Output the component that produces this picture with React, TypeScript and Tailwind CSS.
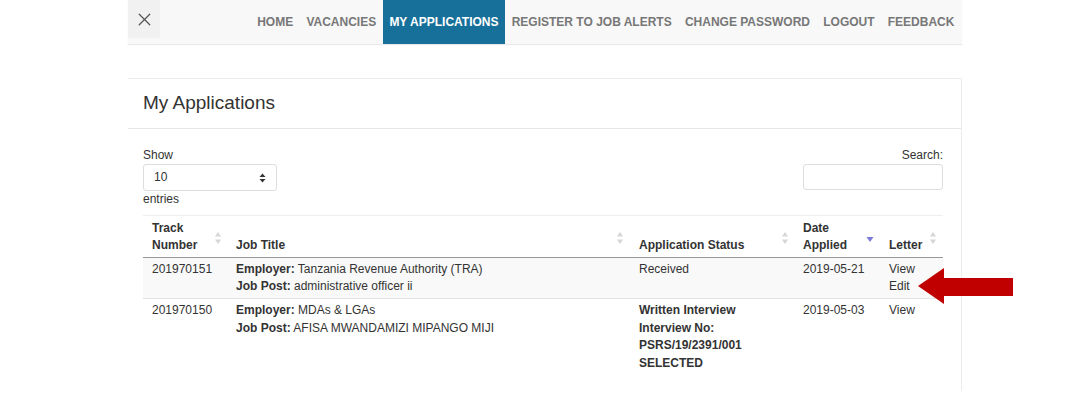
import { X } from 'lucide-react';

const navItems = [
  'HOME',
  'VACANCIES',
  'MY APPLICATIONS',
  'REGISTER TO JOB ALERTS',
  'CHANGE PASSWORD',
  'LOGOUT',
  'FEEDBACK',
];

function SortIcon({ active }: { active?: boolean }) {
  if (active) {
    return (
      <svg width="8" height="12" viewBox="0 0 8 12" className="absolute right-[6px] bottom-[11px]">
        <polygon points="0.5,3 7.5,3 4,8" fill="#7b7bd9" />
      </svg>
    );
  }
  return (
    <svg width="8" height="14" viewBox="0 0 8 14" className="absolute right-[6px] bottom-[12px]">
      <polygon points="4,1 7,5.5 1,5.5" fill="#d6d6d6" />
      <polygon points="1,8.5 7,8.5 4,13" fill="#d6d6d6" />
    </svg>
  );
}

export default function App() {
  return (
    <div
      className="relative min-h-[405px] w-[1080px] bg-white text-[12px] text-[#333]"
      style={{ fontFamily: '"Liberation Sans", Arial, sans-serif' }}
    >
      <div className="ml-[128px] w-[834px]">
        {/* Top nav */}
        <div className="flex h-[44px] items-start justify-between bg-[#f8f8f8] shadow-[0_1px_1px_#e9e9e9]">
          <div className="flex h-[38px] w-[32px] items-center justify-center bg-[#f1f1f1]">
            <X size={21} strokeWidth={1.5} className="text-[#555]" />
          </div>
          <nav className="flex h-[44px] pr-[1px]">
            {navItems.map((item) => (
              <div
                key={item}
                className={`flex h-[44px] items-center px-[6.6px] text-[12px] font-bold ${
                  item === 'MY APPLICATIONS' ? 'bg-[#17709a] text-white' : 'text-[#777]'
                }`}
              >
                {item}
              </div>
            ))}
          </nav>
        </div>

        {/* Panel */}
        <div className="mt-[34px] border-t border-r border-[#ececec]">
          <div className="flex h-[50px] items-center border-b border-[#e6e6e6] px-[15px]">
            <h1 className="text-[19px] font-normal text-[#333]">My Applications</h1>
          </div>

          <div className="px-[15px] pt-[18px] pb-[15px]">
            <div className="flex w-[800px] justify-between leading-[17px]">
              <div>
                <div>Show</div>
                <div className="flex h-[27px] w-[134px] items-center justify-between rounded-[3px] border border-[#ddd] pl-[10px] pr-[10px]">
                  <span>10</span>
                  <svg width="7" height="10" viewBox="0 0 7 10">
                    <polygon points="3.5,0.5 6.5,4 0.5,4" fill="#333" />
                    <polygon points="0.5,6 6.5,6 3.5,9.5" fill="#333" />
                  </svg>
                </div>
                <div>entries</div>
              </div>
              <div className="flex flex-col items-end">
                <div>Search:</div>
                <div className="h-[26px] w-[140px] rounded-[3px] border border-[#ddd]" />
              </div>
            </div>

            <table className="mt-[7px] w-[800px] table-fixed border-collapse border-t border-[#eee] leading-[17px]">
              <colgroup>
                <col className="w-[85px]" />
                <col className="w-[402px]" />
                <col className="w-[165px]" />
                <col className="w-[85px]" />
                <col className="w-[63px]" />
              </colgroup>
              <thead>
                <tr className="border-b border-[#999] text-left align-bottom font-bold">
                  <th className="relative px-[9px] pt-[4px] pb-[3px]">
                    Track
                    <br />
                    Number
                    <SortIcon />
                  </th>
                  <th className="relative px-[8px] pt-[4px] pb-[3px]">
                    Job Title
                    <SortIcon />
                  </th>
                  <th className="relative px-[9px] pt-[4px] pb-[3px]">
                    Application Status
                    <SortIcon />
                  </th>
                  <th className="relative px-[8px] pt-[4px] pb-[3px]">
                    Date
                    <br />
                    Applied
                    <SortIcon active />
                  </th>
                  <th className="relative px-[9px] pt-[4px] pb-[3px]">
                    Letter
                    <SortIcon />
                  </th>
                </tr>
              </thead>
              <tbody>
                <tr className="border-b border-[#e3e3e3] bg-[#f9f9f9] align-top">
                  <td className="px-[9px] pt-[3px] pb-[3px]">201970151</td>
                  <td className="px-[8px] pt-[3px] pb-[3px]">
                    <div>
                      <b>Employer:</b> Tanzania Revenue Authority (TRA)
                    </div>
                    <div>
                      <b>Job Post:</b> administrative officer ii
                    </div>
                  </td>
                  <td className="px-[9px] pt-[3px] pb-[3px]">Received</td>
                  <td className="px-[8px] pt-[3px] pb-[3px]">2019-05-21</td>
                  <td className="px-[9px] pt-[3px] pb-[3px]">
                    <div>View</div>
                    <div>Edit</div>
                  </td>
                </tr>
                <tr className="align-top leading-[17.7px]">
                  <td className="px-[9px] pt-[3px] pb-[3px]">201970150</td>
                  <td className="px-[8px] pt-[3px] pb-[3px]">
                    <div>
                      <b>Employer:</b> MDAs &amp; LGAs
                    </div>
                    <div>
                      <b>Job Post:</b> AFISA MWANDAMIZI MIPANGO MIJI
                    </div>
                  </td>
                  <td className="px-[9px] pt-[3px] pb-[3px] font-bold">
                    <div>Written Interview</div>
                    <div>Interview No:</div>
                    <div>PSRS/19/2391/001</div>
                    <div>SELECTED</div>
                  </td>
                  <td className="px-[8px] pt-[3px] pb-[3px]">2019-05-03</td>
                  <td className="px-[9px] pt-[3px] pb-[3px]">View</td>
                </tr>
              </tbody>
            </table>
          </div>
        </div>
      </div>

      {/* Red annotation arrow */}
      <svg
        width="96"
        height="37"
        viewBox="0 0 96 37"
        className="absolute left-[918px] top-[268px]"
      >
        <polygon points="0,18 26,0 26,10 95,10 95,28 26,28 26,36" fill="#c00000" />
      </svg>
    </div>
  );
}
